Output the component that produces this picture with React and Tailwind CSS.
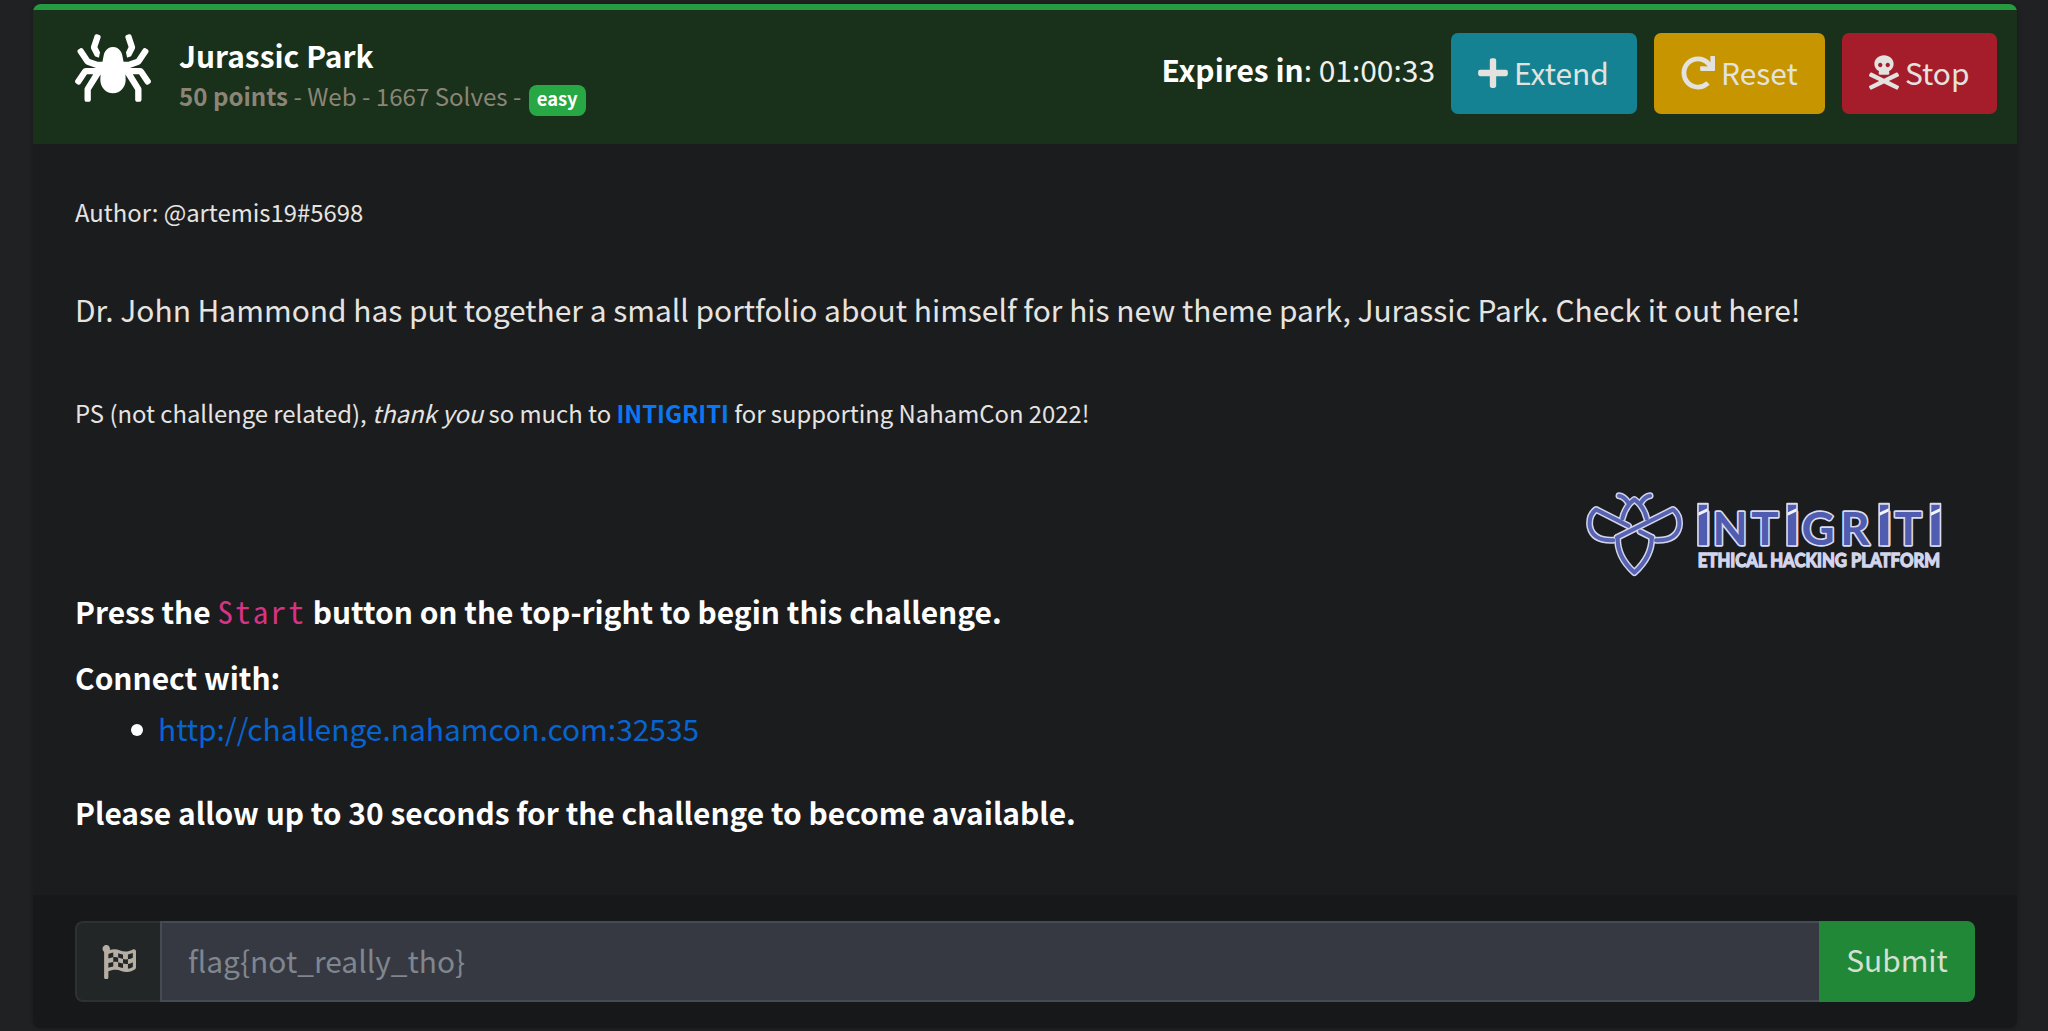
import React from "react";
import { FaSpider, FaPlus, FaRedo, FaSkullCrossbones, FaFlagCheckered } from "react-icons/fa";

const BEE_PATHS = [
  "M177 80 Q192 82 204 100",
  "M270 80 Q255 82 243 100",
  "M187 148 Q195 112 223 91 Q252 112 260 148",
  "M205 170 L108 121 Q84 140 90 174 Q100 216 160 213",
  "M240 187 L276 205",
  "M171 205 L339 121 Q363 140 357 174 Q347 216 288 213",
  "M173 205 Q170 262 223 310 Q276 262 275 205",
];

const LETTERS = [
  ["I", 414],
  ["N", 457],
  ["T", 573],
  ["I", 680],
  ["G", 724],
  ["R", 840],
  ["I", 956],
  ["T", 1003],
  ["I", 1106],
];

function IntigritiLogo() {
  return (
    <svg viewBox="75 60 1097 266" className="mr-[-10px] h-[89px] w-[366px] shrink-0 overflow-visible" fill="none">
      {BEE_PATHS.map((d) => (
        <path key={d} d={d} stroke="#d3d4ea" strokeWidth="21" strokeLinecap="round" strokeLinejoin="round" />
      ))}
      {BEE_PATHS.map((d) => (
        <path key={d} d={d} stroke="#5763b3" strokeWidth="12" strokeLinecap="round" strokeLinejoin="round" />
      ))}
      <text y="228" x={LETTERS.map((l) => l[1]).join(" ")} className="font-['Lato',sans-serif] font-bold" fontSize="137" fill="#505cb0" stroke="#dadbee" strokeWidth="10" paintOrder="stroke" strokeLinejoin="round">
        INTIGRITI
      </text>
      {[415, 682, 958, 1112].map((x) => (
        <g key={x}>
          <rect x={x - 4} y="101" width="35" height="132" rx="3" fill="#dadbee" />
          <rect x={x + 1} y="107" width="25" height="121" fill="#505cb0" />
          <path d={`M${x} 130 L${x + 27} 117 V127 L${x} 140 Z`} fill="#f4f4fb" />
        </g>
      ))}
      <text x="413" y="294" textLength="726" lengthAdjust="spacingAndGlyphs" className="font-['Lato',sans-serif] font-bold" fontSize="54" fill="#d3d5ec" stroke="#d3d5ec" strokeWidth="4">
        ETHICAL HACKING PLATFORM
      </text>
    </svg>
  );
}

function ActionButton({ icon, label, className }) {
  return (
    <button className={`flex h-[81px] items-center rounded-[7px] pb-[2px] pl-[27px] text-[#e4e2de] ${className}`}>
      {icon}
      <span className="pb-[2px]">{label}</span>
    </button>
  );
}

export default function App() {
  return (
    <div className="h-[1031px] overflow-hidden bg-[#1f2123] pl-[33px] pr-[31px] pt-[4px] font-['Noto_Sans_CJK_SC',sans-serif] text-[29.93px] leading-[46px] text-[#e6e4e1]">
      <main className="flex h-[1024px] flex-col overflow-hidden rounded-[8px] bg-[#1b1c1e] shadow-[0_0_4px_rgba(0,0,0,0.25)]">
        <header className="flex h-[140px] shrink-0 border-t-[6px] border-[#269a40] bg-[#19301a] pl-[42px] pr-[20px]">
          <FaSpider className="mt-[20px] h-[76px] w-[76px] text-white" />
          <div className="ml-[28px] mt-[22px] flex-1">
            <h1 className="font-bold text-white">Jurassic Park</h1>
            <p className="mt-[-1px] flex h-[37px] items-center whitespace-pre text-[24.1px] leading-[37px] text-[#8b8577]">
              <b>50 points</b>
              <span> - Web - 1667 Solves - </span>
              <span className="ml-[2px] mt-[9px] flex h-[31px] w-[57px] items-center justify-center rounded-[8px] bg-[#28a745] text-[18.4px] font-bold leading-[31px] text-white">
                <span className="pb-[3px]">easy</span>
              </span>
            </p>
          </div>
          <div className="flex items-start pt-[23px]">
            <p className="mr-[16px] mt-[13px] whitespace-nowrap text-[#f0efed]">
              <b className="text-white">Expires in</b>: 01:00:33
            </p>
            <ActionButton label="Extend" icon={<FaPlus className="mr-[6px] h-[34px] w-[30px]" />} className="mr-[17px] w-[186px] bg-[#148292]" />
            <ActionButton label="Reset" icon={<FaRedo className="mr-[6px] size-[34px]" />} className="mr-[17px] w-[171px] bg-[#c69500]" />
            <ActionButton label="Stop" icon={<FaSkullCrossbones className="mr-[6px] h-[35px] w-[30px]" />} className="w-[155px] bg-[#a51d2a]" />
          </div>
        </header>

        <section className="flex-1 pl-[42px] pr-[76px] pt-[50px]">
          <p className="text-[23.85px] leading-[36px]">Author: @artemis19#5698</p>
          <p className="mt-[56px] whitespace-nowrap">
            Dr. John Hammond has put together a small portfolio about himself for his new theme park, Jurassic Park. Check it out here!
          </p>
          <p className="mt-[63px] text-[23.85px] leading-[36px]">
            PS (not challenge related), <i>thank you</i> so much to <b className="text-[#0a78f5]">INTIGRITI</b> for supporting NahamCon 2022!
          </p>
          <div className="flex h-[157px] justify-end pt-[58px]">
            <IntigritiLogo />
          </div>
          <p className="font-bold text-white">
            Press the{" "}
            <code className="font-['Noto_Sans_Mono_CJK_SC',monospace] text-[31px] font-normal tracking-[2.2px] text-[#d63384]">Start</code>{" "}
            button on the top-right to begin this challenge.
          </p>
          <p className="mt-[20px] font-bold text-white">Connect with:</p>
          <ul className="mt-[5px] flex items-center pl-[56px]">
            <li className="flex items-center">
              <span className="mr-[15px] mt-[4px] size-[12px] rounded-full bg-white" />
              <a className="text-[#0665d0]">http://challenge.nahamcon.com:32535</a>
            </li>
          </ul>
          <p className="mt-[38px] font-bold text-white">Please allow up to 30 seconds for the challenge to become available.</p>
        </section>

        <footer className="h-[133px] shrink-0 bg-[#17181a] px-[42px] pt-[26px]">
          <form className="flex h-[81px]">
            <span className="flex w-[85px] items-center justify-center rounded-l-[8px] border-2 border-r-0 border-[#2d3132] bg-[#222627]">
              <FaFlagCheckered className="size-[34px] text-[#b7aea3]" />
            </span>
            <span className="flex flex-1 items-center border-2 border-r-0 border-[#454b52] bg-[#363942] pb-[4px] pl-[26px] text-[#7f868e]">
              flag{"{"}not_really_tho{"}"}
            </span>
            <button type="button" className="w-[156px] rounded-r-[8px] bg-[#218838] pb-[5px] text-[#d3e0d2]">
              Submit
            </button>
          </form>
        </footer>
      </main>
    </div>
  );
}
